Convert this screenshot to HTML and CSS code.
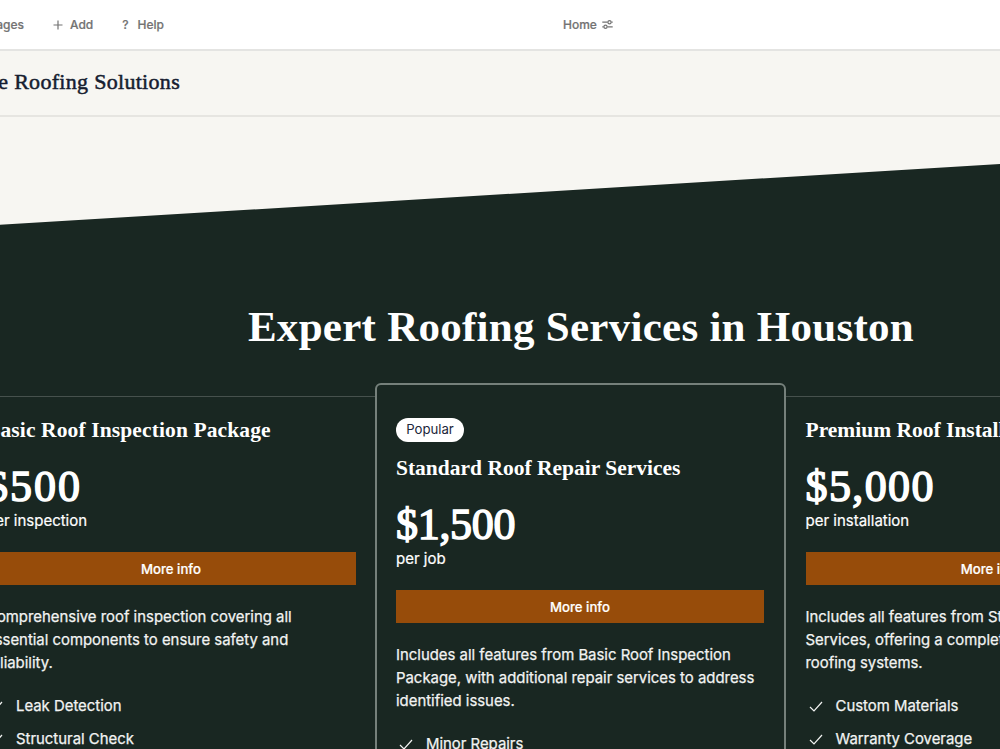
FILE: index.html
```html
<!DOCTYPE html>
<html lang="en">

<head>
  <meta charset="utf-8" />
  <title>Roofing Solutions</title>
  <link rel="stylesheet" href="styles.css">
</head>

<body>
  <div class="page">
    <!-- editor toolbar -->
    <div class="toolbar">
      <div class="toolbar_left">
        <span class="tool">Pages</span>
        <span class="tool tool_add">
          <svg width="10" height="10" viewBox="0 0 10 10"><path d="M5 .5v9M.5 5h9" /></svg>Add
        </span>
        <span class="tool tool_help"><span class="question">?</span>Help</span>
      </div>
      <div class="tool tool_home">Home
        <svg width="11" height="9" viewBox="0 0 11 9"><path d="M.3 2.2h5.4M9.3 2.2h1.4M.3 6.8h1.4M5.3 6.8h5.4" /><circle cx="7.5" cy="2.2" r="1.6" /><circle cx="3.5" cy="6.8" r="1.6" /></svg>
      </div>
    </div>

    <header class="site_header">
      <span class="site_name">e Roofing Solutions</span>
    </header>

    <section class="services">
      <h1 class="services_title">Expert Roofing Services in Houston</h1>

      <div class="plans">
        <!-- basic -->
        <div class="plan plan_side plan_basic">
          <h2 class="plan_name">Basic Roof Inspection Package</h2>
          <div class="price">$500</div>
          <div class="unit">per inspection</div>
          <a class="more">More info</a>
          <p class="desc">Comprehensive roof inspection covering all<br>essential components to ensure safety and<br>reliability.</p>
          <ul class="features">
            <li><svg width="14" height="11" viewBox="0 0 14 11"><path d="M1 6l4 4 8-9" /></svg>Leak Detection</li>
            <li><svg width="14" height="11" viewBox="0 0 14 11"><path d="M1 6l4 4 8-9" /></svg>Structural Check</li>
          </ul>
        </div>

        <!-- standard -->
        <div class="plan plan_popular">
          <span class="badge">Popular</span>
          <h2 class="plan_name">Standard Roof Repair Services</h2>
          <div class="price">$1,500</div>
          <div class="unit">per job</div>
          <a class="more">More info</a>
          <p class="desc">Includes all features from Basic Roof Inspection<br>Package, with additional repair services to address<br>identified issues.</p>
          <ul class="features">
            <li><svg width="14" height="11" viewBox="0 0 14 11"><path d="M1 6l4 4 8-9" /></svg>Minor Repairs</li>
          </ul>
        </div>

        <!-- premium -->
        <div class="plan plan_side plan_premium">
          <h2 class="plan_name">Premium Roof Installation</h2>
          <div class="price">$5,000</div>
          <div class="unit">per installation</div>
          <a class="more">More info</a>
          <p class="desc">Includes all features from Standard Roof Repair<br>Services, offering a complete overhaul of<br>roofing systems.</p>
          <ul class="features">
            <li><svg width="14" height="11" viewBox="0 0 14 11"><path d="M1 6l4 4 8-9" /></svg>Custom Materials</li>
            <li><svg width="14" height="11" viewBox="0 0 14 11"><path d="M1 6l4 4 8-9" /></svg>Warranty Coverage</li>
          </ul>
        </div>
      </div>
    </section>
  </div>
</body>

</html>
```
FILE: styles.css
```css
* {
  box-sizing: border-box;
}

html {
  overflow: hidden;
}

body {
  margin: 0;
  height: 749px;
  overflow: hidden;
  background-color: #f7f6f2;
  font-family: Inter, "Liberation Sans", sans-serif;
}

.page {
  width: 1230px;
  height: 749px;
  margin-left: -35px;
  overflow: hidden;
}

svg {
  fill: none;
  stroke: currentColor;
  stroke-width: 1.2;
}

.toolbar {
  display: flex;
  height: 51px;
  border-bottom: 2px solid #e4e4e2;
  background-color: #ffffff;
  color: #737373;
  font-size: 12px;
  font-weight: 500;
  -webkit-text-stroke: 0.2px #737373;
}

.toolbar_left {
  display: flex;
  justify-content: flex-end;
  gap: 29px;
  width: 199px;
}

.tool {
  display: flex;
  align-items: center;
  height: 49px;
  white-space: nowrap;
}

.tool_add {
  gap: 7px;
}

.tool_help {
  gap: 9px;
}

.tool_home {
  gap: 5px;
  margin-left: 399px;
}

.site_header {
  display: flex;
  justify-content: flex-end;
  align-items: center;
  width: 100%;
  height: 66px;
  padding-right: 1015px;
  padding-bottom: 2px;
  border-bottom: 2px solid #e6e5e1;
}

.site_name {
  color: #161d30;
  font-family: "Liberation Serif", serif;
  font-size: 22px;
  letter-spacing: 0.3px;
  white-space: nowrap;
  -webkit-text-stroke: 0.5px #161d30;
}

.services {
  height: 700px;
  margin-top: 35px;
  padding-top: 148px;
  background-color: #192722;
  color: #ffffff;
  clip-path: polygon(0 75px, 100% 0, 100% 100%, 0 100%);
}

.services_title {
  margin: 0;
  height: 54px;
  padding-left: 2px;
  font-family: "Liberation Serif", serif;
  font-size: 43px;
  font-weight: bold;
  line-height: 54px;
  letter-spacing: 0.27px;
  text-align: center;
}

.plans {
  display: flex;
  align-items: flex-start;
  margin-top: 29px;
}

.plan {
  flex-shrink: 0;
  width: 410px;
  height: 420px;
  padding: 0 20px;
  white-space: nowrap;
}

.plan_side {
  margin-top: 13px;
  padding-top: 20px;
  border-top: 1px solid #46514d;
}

.plan_basic {
  padding-left: 21px;
  padding-right: 19px;
}

.plan_basic .plan_name {
  letter-spacing: 0.12px;
}

.plan_premium {
  padding-left: 19.5px;
}

.plan_popular {
  width: 411px;
  padding: 33px 20px 0 19px;
  border: 2px solid #75807b;
  border-radius: 6px;
}

.badge {
  display: block;
  width: 68px;
  height: 24px;
  margin-bottom: 13px;
  border-radius: 12px;
  background-color: #ffffff;
  color: #20263a;
  font-size: 13.2px;
  line-height: 23px;
  text-align: center;
}

.plan_name {
  margin: 0;
  font-family: "Liberation Serif", serif;
  font-size: 21.5px;
  font-weight: bold;
  line-height: 26px;
}

.price {
  margin-top: 18px;
  font-family: "Liberation Serif", serif;
  font-size: 44px;
  letter-spacing: 1.4px;
  line-height: 52px;
  height: 50px;
  -webkit-text-stroke: 1.5px #ffffff;
}

.plan_basic .price {
  letter-spacing: 2px;
}

.plan_popular .price {
  letter-spacing: -0.3px;
}

.unit {
  margin-top: -2px;
  font-size: 15px;
  line-height: 23px;
  -webkit-text-stroke: 0.2px #ffffff;
}

.more {
  display: block;
  height: 33px;
  margin-top: 20px;
  background-color: #974c0a;
  font-size: 13.2px;
  font-weight: 500;
  line-height: 34px;
  text-align: center;
  -webkit-text-stroke: 0.2px #ffffff;
}

.desc {
  margin: 21px 0 20px;
  font-size: 14.9px;
  line-height: 23px;
  color: #f2f3f2;
  -webkit-text-stroke: 0.25px #f2f3f2;
}

.features {
  margin: 0;
  padding: 0;
  list-style: none;
  font-size: 14.9px;
  line-height: 23px;
  color: #f2f3f2;
  -webkit-text-stroke: 0.25px #f2f3f2;
}

.features li {
  display: flex;
  align-items: center;
  gap: 13px;
  margin-bottom: 10px;
  padding-left: 3px;
}
```
